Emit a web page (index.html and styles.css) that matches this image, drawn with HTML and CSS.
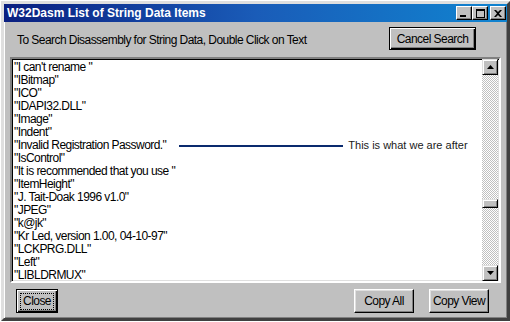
FILE: index.html
```html
<!DOCTYPE html>
<html lang="en">
<head>
  <meta charset="UTF-8" />
  <title>W32Dasm List of String Data Items</title>
  <link rel="stylesheet" href="styles.css">
</head>
<body>
  <div class="window">
    <div class="titlebar">
      <span class="title">W32Dasm List of String Data Items</span>
      <div class="caption-btns">
        <span class="cap"><svg width="8" height="7" viewBox="0 0 8 7"><rect x="0" y="5" width="6" height="2" fill="#000"/></svg></span>
        <span class="cap"><svg width="9" height="9" viewBox="0 0 9 9"><path d="M0 0h9v9h-9z M1 2v6h7v-6z" fill="#000" fill-rule="evenodd"/></svg></span>
        <span class="cap cap-close"><svg width="8" height="7" viewBox="0 0 8 7"><path d="M0 0h2l2 2 2-2h2l-3 3.5 3 3.5h-2l-2-2-2 2h-2l3-3.5z" fill="#000"/></svg></span>
      </div>
    </div>

    <div class="body">
      <div class="top-row">
        <span class="hint">To Search Disassembly for String Data, Double Click on Text</span>
        <button class="btn btn-default">Cancel Search</button>
      </div>

      <div class="listbox">
        <ul class="items">
          <li>"I can't rename "</li>
          <li>"IBitmap"</li>
          <li>"ICO"</li>
          <li>"IDAPI32.DLL"</li>
          <li>"Image"</li>
          <li>"Indent"</li>
          <li class="marked">"Invalid Registration Password."<span class="pointer"></span><span class="note">This is what we are after</span></li>
          <li>"IsControl"</li>
          <li>"It is recommended that you use "</li>
          <li>"ItemHeight"</li>
          <li>"J. Tait-Doak 1996 v1.0"</li>
          <li>"JPEG"</li>
          <li>"k@jk"</li>
          <li>"Kr Led, version 1.00, 04-10-97"</li>
          <li>"LCKPRG.DLL"</li>
          <li>"Left"</li>
          <li>"LIBLDRMUX"</li>
        </ul>
        <div class="scrollbar">
          <span class="sb-btn"><svg width="7" height="4" viewBox="0 0 7 4"><path d="M3.5 0l3.5 4h-7z" fill="#000"/></svg></span>
          <div class="sb-track"><span class="sb-thumb"></span></div>
          <span class="sb-btn"><svg width="7" height="4" viewBox="0 0 7 4"><path d="M0 0h7l-3.5 4z" fill="#000"/></svg></span>
        </div>
      </div>

      <div class="bottom-row">
        <button class="btn btn-focus"><span class="focus-rect">Close</span></button>
        <div class="right-btns">
          <button class="btn btn-copy">Copy All</button>
          <button class="btn btn-copy">Copy View</button>
        </div>
      </div>
    </div>
  </div>
</body>
</html>
```

FILE: styles.css
```css
body {
  margin: 0;
  background: #ffffff;
  font-family: 'Liberation Sans', sans-serif;
}

.window {
  margin: 1px 0 0 1px;
  width: 509px;
  height: 320px;
  box-sizing: border-box;
  background: #c0c0c0;
  border: 3px solid;
  border-color: #dfdfdf #404040 #404040 #dfdfdf;
  box-shadow: inset 1px 1px 0 #ffffff, inset -1px -1px 0 #808080;
  display: flex;
  flex-direction: column;
}

.titlebar {
  height: 18px;
  background: linear-gradient(to right, #0a1f80, #1a5cb8 50%, #1084d0);
  display: flex;
  align-items: center;
  justify-content: space-between;
  padding: 0 1px 0 3px;
}

.title {
  font-weight: bold;
  font-size: 12px;
  color: #ffffff;
}

.caption-btns {
  display: flex;
}

.cap {
  width: 16px;
  height: 14px;
  box-sizing: border-box;
  background: #c0c0c0;
  border: 1px solid;
  border-color: #ffffff #000000 #000000 #ffffff;
  box-shadow: inset -1px -1px 0 #808080;
  display: flex;
  align-items: center;
  justify-content: center;
}

.cap-close {
  margin-left: 2px;
}

.body {
  flex: 1;
  display: flex;
  flex-direction: column;
  padding: 5px 6px 4px 6px;
}

.top-row {
  height: 23px;
  display: flex;
  align-items: center;
  justify-content: space-between;
  padding: 0 25px 0 7px;
}

.hint,
.items,
.btn {
  font-family: 'Liberation Sans', sans-serif;
  font-size: 12px;
  letter-spacing: -0.55px;
  color: #000;
}

.hint {
  margin-top: 2px;
}

.btn {
  background: #c0c0c0;
  border: 1px solid;
  border-color: #ffffff #000000 #000000 #ffffff;
  box-shadow: inset -1px -1px 0 #808080, inset 1px 1px 0 #dfdfdf;
  padding: 0;
  margin: 0;
  white-space: nowrap;
}

.btn-default {
  width: 87px;
  height: 23px;
  border: 1px solid #000;
  box-shadow: inset 1px 1px 0 #ffffff, inset -1px -1px 0 #000000, inset -2px -2px 0 #808080;
}

.listbox {
  margin-top: 7px;
  height: 226px;
  box-sizing: border-box;
  background: #ffffff;
  border: 2px solid;
  border-color: #808080 #ffffff #ffffff #808080;
  box-shadow: inset 1px 1px 0 #000000, inset -1px -1px 0 #dfdfdf;
  display: flex;
  padding: 1px;
}

.items {
  flex: 1;
  list-style: none;
  margin: 0;
  padding: 1px 0 0 1px;
}

.items li {
  height: 13px;
  line-height: 13px;
  display: flex;
  align-items: center;
  white-space: pre;
}

.pointer {
  width: 164px;
  height: 2px;
  background: #0a2a6e;
  margin-left: 13px;
}

.note {
  font-size: 11px;
  letter-spacing: 0;
  color: #1a1a1a;
  margin-left: 5px;
}

.scrollbar {
  width: 16px;
  display: flex;
  flex-direction: column;
  margin: -1px 0;
}

.sb-btn {
  width: 16px;
  height: 16px;
  box-sizing: border-box;
  background: #c0c0c0;
  border: 1px solid;
  border-color: #dfdfdf #000000 #000000 #dfdfdf;
  box-shadow: inset 1px 1px 0 #ffffff, inset -1px -1px 0 #808080;
  display: flex;
  align-items: center;
  justify-content: center;
}

.sb-track {
  flex: 1;
  background: repeating-conic-gradient(#c0c0c0 0 25%, #ffffff 0 50%) 0 0 / 2px 2px;
}

.sb-thumb {
  display: block;
  margin-top: 124px;
  height: 9px;
  box-sizing: border-box;
  background: #c0c0c0;
  border: 1px solid;
  border-color: #dfdfdf #000000 #000000 #dfdfdf;
  box-shadow: inset 1px 1px 0 #ffffff, inset -1px -1px 0 #808080;
}

.bottom-row {
  margin-top: 6px;
  height: 24px;
  display: flex;
  justify-content: space-between;
  padding: 0 12px 0 6px;
}

.btn-focus {
  width: 42px;
  height: 24px;
  border: 1px solid #000;
  box-shadow: inset 1px 1px 0 #ffffff, inset -1px -1px 0 #000000, inset -2px -2px 0 #808080;
  display: flex;
  align-items: center;
  justify-content: center;
}

.focus-rect {
  border: 1px dotted #000;
  padding: 1px 2px;
  line-height: 13px;
}

.right-btns {
  display: flex;
  gap: 15px;
}

.btn-copy {
  width: 60px;
  height: 24px;
}
```
